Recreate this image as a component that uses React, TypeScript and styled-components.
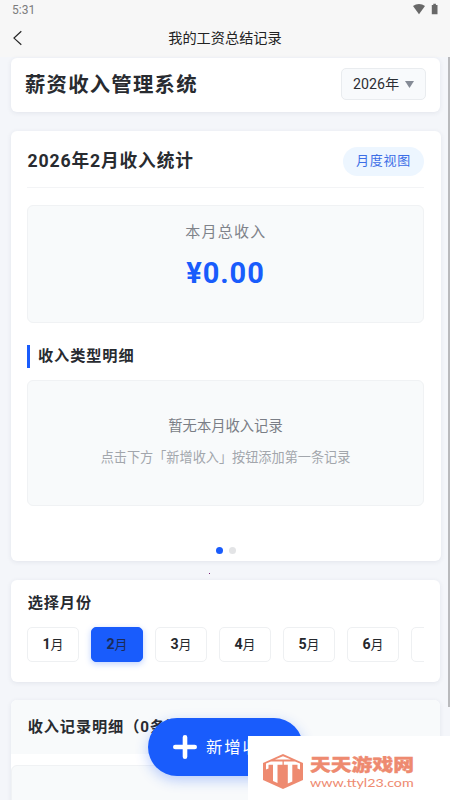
import React from "react";
import styled, { createGlobalStyle, css } from "styled-components";

const GlobalStyle = createGlobalStyle`
  * { box-sizing: border-box; }
  html, body { margin: 0; padding: 0; }
  body {
    width: 450px;
    height: 800px;
    overflow: hidden;
    background: #f4f6fa;
    color: #282b30;
    font-family: Roboto, "Noto Sans CJK SC", sans-serif;
  }
`;

const Screen = styled.div`
  position: relative;
  width: 450px;
  height: 800px;
  overflow: hidden;
  display: flex;
  flex-direction: column;
  background: #f4f6fa;
`;

const TopBar = styled.header`
  flex: none;
  height: 57px;
  background: #f7f7f7;
`;

const StatusBar = styled.div`
  height: 20px;
  padding: 0 11px 0 12px;
  display: flex;
  align-items: center;
  justify-content: space-between;
  font-size: 12px;
  color: #7c7c7c;
`;

const StatusIcons = styled.div`
  display: flex;
  align-items: center;
  gap: 5px;
  margin-top: -2px;
`;

const NavBar = styled.div`
  height: 35px;
  padding: 0 12px;
  display: grid;
  grid-template-columns: 20px 1fr 20px;
  align-items: center;
`;

const NavTitle = styled.div`
  text-align: center;
  font-size: 14.2px;
  line-height: 20px;
  color: #222;
`;

const Content = styled.main`
  flex: 1;
  min-height: 0;
  padding: 1px 10px 0 11px;
  display: flex;
  flex-direction: column;
`;

const Card = styled.section`
  flex: none;
  background: #fff;
  border-radius: 6px;
  box-shadow: 0 1px 5px rgba(40, 60, 90, 0.09);
`;

const HeadCard = styled(Card)`
  height: 54px;
  margin-bottom: 19px;
  padding: 0 14px;
  display: flex;
  align-items: center;
  justify-content: space-between;
`;

const AppTitle = styled.h1`
  margin: 0;
  font-size: 20.4px;
  line-height: 28px;
  font-weight: 700;
  letter-spacing: 1.2px;
`;

const YearSelect = styled.button`
  width: 85px;
  height: 32px;
  margin-top: -2px;
  padding: 0 11px 2px;
  display: flex;
  align-items: center;
  justify-content: space-between;
  border: 1px solid #e9ecef;
  border-radius: 5px;
  background: #f8fafc;
  color: #2b2e33;
  font-family: inherit;
  font-size: 14.2px;
  white-space: nowrap;

  svg {
    margin-top: 2px;
  }
`;

const StatsCard = styled(Card)`
  height: 430px;
  margin-right: -1px;
  margin-bottom: 19px;
  padding: 0 17px 0 16px;
  display: flex;
  flex-direction: column;
`;

const StatsHeader = styled.div`
  height: 57px;
  display: flex;
  align-items: center;
  justify-content: space-between;
  border-bottom: 1px solid #f3f4f6;
  padding-top: 4px;
`;

const StatsTitle = styled.h2`
  margin: -1px 0 0 0.5px;
  font-size: 17.7px;
  line-height: 24px;
  font-weight: 700;
  letter-spacing: 0.85px;
`;

const ViewPill = styled.span`
  width: 81px;
  height: 29px;
  border-radius: 15px;
  background: #edf6ff;
  color: #3c6ee6;
  font-size: 13px;
  line-height: 28px;
  letter-spacing: 0.7px;
  text-align: center;
`;

const panel = css`
  display: flex;
  flex-direction: column;
  align-items: center;
  background: #f8fafb;
  border: 1px solid #f0f2f4;
  border-radius: 6px;
`;

const TotalPanel = styled.div`
  ${panel}
  height: 118px;
  margin-top: 17px;
  padding-top: 14px;
`;

const TotalLabel = styled.div`
  padding-left: 1px;
  font-size: 15px;
  line-height: 24px;
  letter-spacing: 1.25px;
  color: #7f838a;
`;

const TotalAmount = styled.div`
  margin-top: 10px;
  font-size: 29px;
  line-height: 38px;
  font-weight: 700;
  letter-spacing: 0.9px;
  color: #195cfc;
`;

const SectionTitle = styled.h3`
  margin: 22px 0 12px;
  height: 23px;
  padding-left: 8px;
  border-left: 3px solid #195cfc;
  font-size: 15.2px;
  line-height: 22px;
  font-weight: 700;
  letter-spacing: 0.9px;
`;

const EmptyPanel = styled.div`
  ${panel}
  height: 126px;
  padding-top: 34px;
`;

const EmptyTitle = styled.div`
  font-size: 14.3px;
  line-height: 22px;
  color: #7a7e86;
`;

const EmptyHint = styled.div`
  margin-top: 11px;
  font-size: 13.15px;
  line-height: 20px;
  color: #a2a6ac;
`;

const Pager = styled.div`
  display: flex;
  justify-content: center;
  gap: 6px;
  margin-top: 41px;
`;

const PagerDot = styled.span<{ $active?: boolean }>`
  width: 7px;
  height: 7px;
  border-radius: 50%;
  background: ${(p) => (p.$active ? "#195cfc" : "#e3e4e6")};
`;

const MonthCard = styled(Card)`
  height: 102px;
  margin-bottom: 18px;
  padding: 12px 16px 0;
`;

const CardTitle = styled.h3`
  margin: 0 0 0 0.7px;
  font-size: 15.2px;
  line-height: 22px;
  font-weight: 700;
  letter-spacing: 0.9px;
  white-space: nowrap;
`;

const MonthStrip = styled.div`
  display: flex;
  gap: 12px;
  margin: 9px 0 0 -6px;
  padding: 4px 0 10px 6px;
  overflow: hidden;
`;

const MonthButton = styled.button<{ $active?: boolean }>`
  flex: none;
  width: 52px;
  height: 35px;
  padding: 0 0 2px;
  border: 1px solid ${(p) => (p.$active ? "#195cfc" : "#eef0f2")};
  border-radius: 5px;
  background: ${(p) => (p.$active ? "#195cfc" : "#fff")};
  box-shadow: ${(p) => (p.$active ? "0 2px 6px rgba(25, 92, 252, 0.28)" : "none")};
  color: ${(p) => (p.$active ? "#1b2b57" : "#25282d")};
  font-family: inherit;
  font-size: 13px;
`;

const MonthNumber = styled.b`
  font-size: 14.2px;
  font-weight: 700;
`;

const RecordCard = styled(Card)`
  height: 120px;
`;

const RecordHeader = styled.div`
  height: 54px;
  padding: 16px 16px 0;
  border-radius: 6px 6px 0 0;
  background: #f8fafb;
`;

const RecordList = styled.div`
  height: 60px;
  margin-top: 11px;
  border: 1px solid #f0f2f4;
  border-radius: 6px;
  background: #f8fafb;
`;

const AddButton = styled.button`
  position: absolute;
  left: 148px;
  top: 718px;
  width: 155px;
  height: 58px;
  padding: 0 0 0 25px;
  display: flex;
  align-items: center;
  gap: 9px;
  border: 0;
  border-radius: 29px;
  background: #195cfc;
  box-shadow: 0 4px 13px rgba(25, 92, 252, 0.3);
  color: #fff;
  font-family: inherit;
  font-size: 16.4px;
  letter-spacing: 1.8px;
  white-space: nowrap;
`;

const AddLabel = styled.span`
  margin-top: -2px;
`;

const ScrollThumb = styled.div`
  position: absolute;
  right: 0;
  top: 57px;
  width: 2.5px;
  height: 650px;
  background: #b9babd;
`;

const Speck = styled.i`
  position: absolute;
  left: 209px;
  top: 573px;
  width: 1px;
  height: 1px;
  background: #7d1f78;
`;

const SiteBadge = styled.aside`
  position: absolute;
  left: 248px;
  top: 736px;
  width: 202px;
  height: 64px;
  padding: 0 0 0 15px;
  display: flex;
  align-items: flex-start;
  gap: 7px;
  background: #fff;
  color: #ee8a70;
`;

const BadgeLogo = styled.svg`
  flex: none;
  margin-top: 18px;
`;

const BadgeText = styled.div`
  padding-top: 17px;
`;

const BadgeName = styled.div`
  font-size: 20.8px;
  line-height: 24px;
  font-weight: 900;
  white-space: nowrap;
  transform: scaleY(0.84);
  -webkit-text-stroke: 0.4px #ee8a70;
`;

const BadgeUrl = styled.div`
  margin-top: -1px;
  font-family: Lato, sans-serif;
  font-size: 12px;
  line-height: 14px;
  width: 85px;
  white-space: nowrap;
  transform: scaleX(1.19);
  transform-origin: left;
`;

const months = [1, 2, 3, 4, 5, 6, 7];

export default function App() {
  return (
    <Screen>
      <GlobalStyle />
      <TopBar>
        <StatusBar>
          <span>5:31</span>
          <StatusIcons>
            <svg width="14" height="12" viewBox="0 0 14 12">
              <path d="M1 3.1C4.5.2 9.5.2 13 3.1L7 11.3Z" fill="#686868" />
            </svg>
            <svg width="8" height="12" viewBox="0 0 8 12">
              <path d="M2.3.8h2.6V2h1.600v9.300H.8V2h1.500z" fill="#686868" />
            </svg>
          </StatusIcons>
        </StatusBar>
        <NavBar>
          <svg width="12" height="16" viewBox="0 0 12 16" fill="none" stroke="#262626" strokeWidth="1.2">
            <path d="M9.300 1.300 2 8.100l7.300 6.700" />
          </svg>
          <NavTitle>我的工资总结记录</NavTitle>
        </NavBar>
      </TopBar>

      <Content>
        <HeadCard>
          <AppTitle>薪资收入管理系统</AppTitle>
          <YearSelect>
            2026年
            <svg width="9" height="8" viewBox="0 0 9 8">
              <path d="M0 1h9L4.500 8z" fill="#858b96" />
            </svg>
          </YearSelect>
        </HeadCard>

        <StatsCard>
          <StatsHeader>
            <StatsTitle>2026年2月收入统计</StatsTitle>
            <ViewPill>月度视图</ViewPill>
          </StatsHeader>
          <TotalPanel>
            <TotalLabel>本月总收入</TotalLabel>
            <TotalAmount>¥0.00</TotalAmount>
          </TotalPanel>
          <SectionTitle>收入类型明细</SectionTitle>
          <EmptyPanel>
            <EmptyTitle>暂无本月收入记录</EmptyTitle>
            <EmptyHint>点击下方「新增收入」按钮添加第一条记录</EmptyHint>
          </EmptyPanel>
          <Pager>
            <PagerDot $active />
            <PagerDot />
          </Pager>
        </StatsCard>

        <MonthCard>
          <CardTitle>选择月份</CardTitle>
          <MonthStrip>
            {months.map((m) => (
              <MonthButton key={m} $active={m === 2}>
                {m < 7 && (
                  <>
                    <MonthNumber>{m}</MonthNumber>月
                  </>
                )}
              </MonthButton>
            ))}
          </MonthStrip>
        </MonthCard>

        <RecordCard>
          <RecordHeader>
            <CardTitle>收入记录明细（0条）</CardTitle>
          </RecordHeader>
          <RecordList />
        </RecordCard>
      </Content>

      <ScrollThumb />
      <Speck />

      <AddButton>
        <svg width="24" height="24" viewBox="0 0 24 24" stroke="#fff" strokeWidth="4.6" strokeLinecap="round">
          <path d="M12 2.300v19.400M2.300 12h19.400" />
        </svg>
        <AddLabel>新增收入</AddLabel>
      </AddButton>

      <SiteBadge>
        <BadgeLogo width="40" height="35" viewBox="0 0 40 35">
          <path d="M20 0 40 9v17L20 35 0 26V9z" fill="#ee8a70" />
          <g fill="#fff">
            <path d="M3 9.500 8 7.500h11.500v3.300h-5V29L10 27V10.800H5.500v3.600L3 15.600z" />
            <path d="M20.800 7.500H32l5 2v6.100l-2.500-1.200v-3.600H29.300V27.500l-4.500 2V10.800h-4z" />
            <path d="M12 5.500 20 2.200l8 3.300z" />
          </g>
        </BadgeLogo>
        <BadgeText>
          <BadgeName>天天游戏网</BadgeName>
          <BadgeUrl>www.ttyl23.com</BadgeUrl>
        </BadgeText>
      </SiteBadge>
    </Screen>
  );
}
